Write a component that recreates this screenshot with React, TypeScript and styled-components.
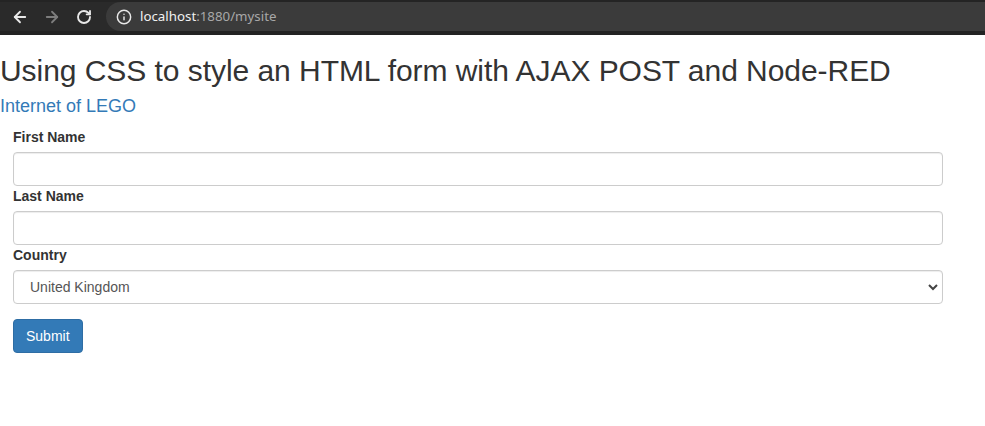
import React from "react";
import styled, { createGlobalStyle } from "styled-components";
import { ArrowLeft, ArrowRight, RotateCw, Info } from "lucide-react";

const Global = createGlobalStyle`
  html, body { margin: 0; padding: 0; background: #fff; }
  body { font-family: "Liberation Sans", Arial, Helvetica, sans-serif; font-size: 14px; line-height: 1.42857; color: #333; }
  * { box-sizing: border-box; }
`;

const ChromeBar = styled.div`
  height: 35px;
  background: #2a2a2a;
  border-top: 2px solid #242424;
  border-bottom: 4px solid #232323;
  display: flex;
  align-items: center;
  padding-left: 4px;
`;

const NavButton = styled.div<{ $dim?: boolean }>`
  width: 32px;
  height: 29px;
  display: flex;
  align-items: center;
  justify-content: center;
  color: ${(p) => (p.$dim ? "#7d7d7d" : "#e8e8e8")};
`;

const Omnibox = styled.div`
  flex: 1;
  height: 29px;
  margin-left: 6px;
  background: #3b3b3b;
  border-radius: 15px 0 0 15px;
  display: flex;
  align-items: center;
  padding-left: 10px;
  gap: 8px;
  color: #e8e8e8;
  font-family: "Noto Sans", "Open Sans", sans-serif;
  font-size: 13.3px;
`;

const Host = styled.span`
  color: #f1f1f1;
`;
const Rest = styled.span`
  color: #a8a8a8;
`;

const Page = styled.div`
  padding-top: 19px;
`;

const Title = styled.h2`
  font-family: "Liberation Sans", Arial, sans-serif;
  font-size: 30px;
  font-weight: 500;
  line-height: 1.1;
  letter-spacing: -0.05px;
  margin: 0 0 10px;
  color: #333;
`;

const Subtitle = styled.h4`
  font-size: 18px;
  font-weight: 500;
  line-height: 1.1;
  margin: 10px 0 10px;
  color: #337ab7;
`;

const Form = styled.form`
  padding-left: 13px;
  width: 943px;
`;

const Label = styled.label`
  display: block;
  font-weight: bold;
  margin-bottom: 5px;
  line-height: 20px;
`;

const Input = styled.input`
  display: block;
  width: 100%;
  height: 34px;
  padding: 6px 12px;
  font-size: 14px;
  color: #555;
  background: #fff;
  border: 1px solid #ccc;
  border-radius: 4px;
  box-shadow: inset 0 1px 1px rgba(0, 0, 0, 0.075);
  font-family: inherit;
`;

const SelectWrap = styled.div`
  position: relative;
`;

const Select = styled.select`
  display: block;
  width: 100%;
  height: 34px;
  padding: 6px 12px 6px 16px;
  font-size: 14px;
  font-family: inherit;
  color: #555;
  background: #fff;
  border: 1px solid #ccc;
  border-radius: 4px;
  box-shadow: inset 0 1px 1px rgba(0, 0, 0, 0.075);
  appearance: none;
  -webkit-appearance: none;
`;

const Chevron = styled.svg`
  position: absolute;
  right: 4px;
  top: 13px;
  pointer-events: none;
`;

const Button = styled.button`
  margin-top: 15px;
  display: inline-block;
  height: 34px;
  padding: 6px 12px;
  font-size: 14px;
  font-family: inherit;
  line-height: 20px;
  color: #fff;
  background: #337ab7;
  border: 1px solid #2e6da4;
  border-radius: 4px;
`;

export default function App() {
  return (
    <>
      <Global />
      <ChromeBar>
        <NavButton>
          <ArrowLeft size={18} strokeWidth={2.4} />
        </NavButton>
        <NavButton $dim>
          <ArrowRight size={18} strokeWidth={2.4} />
        </NavButton>
        <NavButton>
          <RotateCw size={16} strokeWidth={2.8} />
        </NavButton>
        <Omnibox>
          <Info size={16} strokeWidth={2.2} />
          <span>
            <Host>localhost</Host>
            <Rest>:1880/mysite</Rest>
          </span>
        </Omnibox>
      </ChromeBar>
      <Page>
        <Title>Using CSS to style an HTML form with AJAX POST and Node-RED</Title>
        <Subtitle>Internet of LEGO</Subtitle>
        <Form onSubmit={(e) => e.preventDefault()}>
          <Label>First Name</Label>
          <Input type="text" />
          <Label>Last Name</Label>
          <Input type="text" />
          <Label>Country</Label>
          <SelectWrap>
            <Select defaultValue="uk">
              <option value="uk">United Kingdom</option>
              <option value="us">United States</option>
            </Select>
            <Chevron width="12" height="8" viewBox="0 0 12 8">
              <path d="M2 2 L6 6 L10 2" fill="none" stroke="#444" strokeWidth="2" />
            </Chevron>
          </SelectWrap>
          <Button type="submit">Submit</Button>
        </Form>
      </Page>
    </>
  );
}
